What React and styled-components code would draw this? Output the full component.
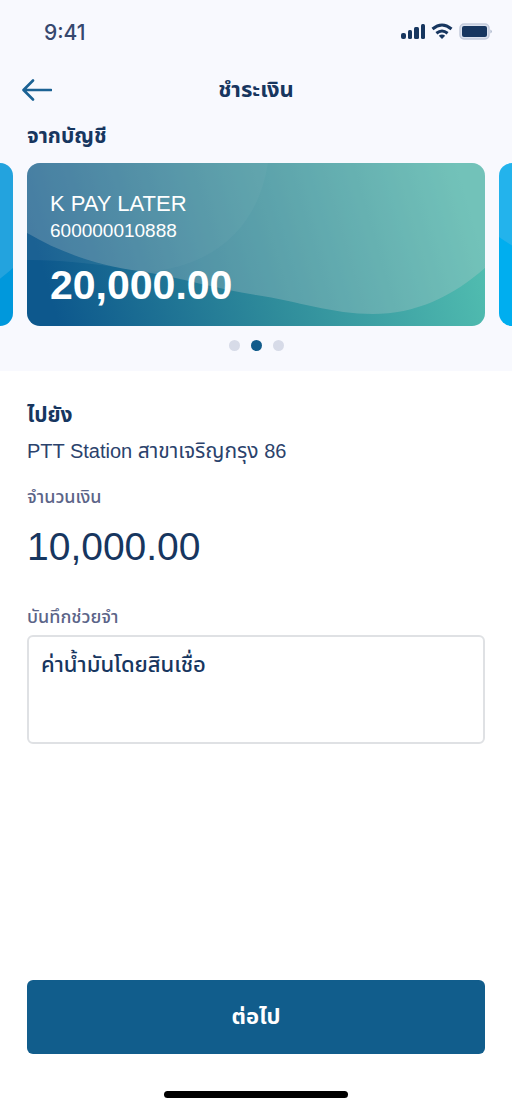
import { useState } from "react";
import styled, { createGlobalStyle } from "styled-components";

const accounts = [
  { id: "savings", from: "#0098dc", to: "#0098dc" },
  {
    id: "paylater",
    name: "K PAY LATER",
    number: "600000010888",
    balance: "20,000.00",
    from: "#0d588d",
    to: "#51bdb0",
  },
  { id: "current", from: "#00aeef", to: "#00aeef" },
];

function CardWave({ id, from, to }) {
  return (
    <WaveSvg viewBox="0 0 458 163" preserveAspectRatio="none" aria-hidden="true">
      <defs>
        <linearGradient
          id={`base-${id}`}
          gradientUnits="userSpaceOnUse"
          x1="40"
          y1="190"
          x2="450"
          y2="70"
        >
          <stop offset="0" stopColor={from} />
          <stop offset="0.5" stopColor="#2f8c9b" />
          <stop offset="1" stopColor={to} />
        </linearGradient>
      </defs>
      <rect width="458" height="163" fill={`url(#base-${id})`} />
      <path
        d="M0 97C38 97 72 101 112 108C72 103 34 90 0 70Z"
        fill="#fff"
        fillOpacity="0.06"
      />
      <path
        d="M0 0H458V105C425 134 388 151 346 151C305 151 270 138 229 132C190 126 155 115 112 108C72 103 34 90 0 70Z"
        fill="#c8d0d2"
        fillOpacity="0.28"
      />
      <path
        d="M0 0H241C232 58 196 98 130 108Q120 109 112 108C72 103 34 90 0 70Z"
        fill="#fff"
        fillOpacity="0.03"
      />
    </WaveSvg>
  );
}

function SideWave({ id, from }) {
  return (
    <WaveSvg viewBox="0 0 458 163" preserveAspectRatio="none" aria-hidden="true">
      <rect width="458" height="163" fill={from} />
      <path
        d={
          id === "savings"
            ? "M0 0H458V105C425 134 388 151 346 151C240 151 130 120 0 70Z"
            : "M0 0H458V105C425 134 388 151 346 151C200 140 80 130 0 74Z"
        }
        fill="#8cc4e4"
        fillOpacity="0.25"
      />
    </WaveSvg>
  );
}

function StatusIcons() {
  return (
    <svg width="92" height="18" viewBox="0 0 92 18" aria-label="สถานะเครื่อง">
      <g fill="#17365f">
        <rect x="0" y="10" width="5" height="6" rx="2" />
        <rect x="7" y="7" width="4" height="9" rx="1.5" />
        <rect x="13" y="4" width="5" height="12" rx="1.5" />
        <rect x="20" y="1" width="4" height="15" rx="1.5" />
      </g>
      <g fill="none" stroke="#17365f" strokeWidth="3">
        <path d="M31.500 6Q41 -2 50.500 6" />
        <path d="M35.400 10.200Q41 5.800 46.600 10.200" />
      </g>
      <path d="M37.800 12.700Q41 10.300 44.200 12.700L41 16Z" fill="#17365f" />
      <rect x="59" y="1" width="29" height="15" rx="4" fill="#dce2ee" stroke="#c3cbdb" strokeWidth="1.5" />
      <rect x="61" y="3" width="25" height="11" rx="2" fill="#17365f" />
      <path d="M89.500 6.500Q92 8.500 89.500 10.500Z" fill="#9ca9c0" />
    </svg>
  );
}

function App() {
  const [note, setNote] = useState("ค่าน้ำมันโดยสินเชื่อ");

  return (
    <Page>
      <GlobalStyle />
      <Top>
        <StatusBar>
          <Time>9:41</Time>
          <StatusIcons />
        </StatusBar>
        <NavBar>
          <BackButton type="button" aria-label="ย้อนกลับ">
            <svg width="30" height="22" viewBox="0 0 30 22" fill="none" stroke="#1b6294" strokeWidth="2.6" strokeLinecap="round" strokeLinejoin="round">
              <path d="M29 11H2M11 1.500L1.500 11L11 20.500" />
            </svg>
          </BackButton>
          <PageTitle>ชำระเงิน</PageTitle>
        </NavBar>
        <FromTitle>จากบัญชี</FromTitle>
        <Carousel>
          {accounts.map((account) => (
            <Card key={account.id}>
              {account.name ? (
                <CardWave {...account} />
              ) : (
                <SideWave {...account} />
              )}
              <CardBody>
                <CardName>{account.name}</CardName>
                <CardNumber>{account.number}</CardNumber>
                <CardBalance>{account.balance}</CardBalance>
              </CardBody>
            </Card>
          ))}
        </Carousel>
        <Dots>
          {accounts.map((account) => (
            <Dot key={account.id} $active={account.id === "paylater"} />
          ))}
        </Dots>
      </Top>
      <Details>
        <ToTitle>ไปยัง</ToTitle>
        <Payee>
          PTT Station <Branch>สาขาเจริญกรุง</Branch> 86
        </Payee>
        <Label as="p">จำนวนเงิน</Label>
        <Amount>10,000.00</Amount>
        <Label htmlFor="note">บันทึกช่วยจำ</Label>
        <Note
          id="note"
          value={note}
          onChange={(e) => setNote(e.target.value)}
        />
      </Details>
      <Footer>
        <NextButton type="button">ต่อไป</NextButton>
        <HomeIndicator />
      </Footer>
    </Page>
  );
}

const GlobalStyle = createGlobalStyle`
  * {
    box-sizing: border-box;
  }

  body {
    margin: 0;
    background-color: #fff;
  }

  body, button, textarea {
    font-family: "Liberation Sans", "Noto Sans Thai", "Noto Sans", sans-serif;
  }

  h1, h2, p {
    margin: 0;
  }
`;

const Page = styled.div`
  min-height: 100vh;
  display: flex;
  flex-direction: column;
  color: #17365f;
`;

const Top = styled.header`
  background-color: #f8f9fe;
  padding-bottom: 20px;
`;

const StatusBar = styled.div`
  height: 64px;
  padding: 0 19px 0 44px;
  display: flex;
  align-items: center;
  justify-content: space-between;
`;

const Time = styled.span`
  font-family: "Inter", sans-serif;
  font-size: 21px;
  font-weight: 500;
  color: #36486e;
`;

const NavBar = styled.nav`
  height: 52px;
  padding: 0 22px;
  display: grid;
  grid-template-columns: 30px 1fr 30px;
  align-items: center;
`;

const BackButton = styled.button`
  display: flex;
  padding: 0;
  border: none;
  background: none;
  cursor: pointer;
`;

const PageTitle = styled.h1`
  font-size: 22px;
  line-height: 32px;
  font-weight: 700;
  text-align: center;
`;

const SectionTitle = styled.h2`
  font-size: 21px;
  line-height: 32px;
  font-weight: 700;
`;

const FromTitle = styled(SectionTitle)`
  padding: 4px 27px 0;
  margin-bottom: 11px;
`;

const ToTitle = styled(SectionTitle)`
  margin-bottom: 4px;
`;

const Carousel = styled.div`
  display: flex;
  justify-content: center;
  gap: 14px;
  overflow: hidden;
`;

const Card = styled.article`
  position: relative;
  flex: 0 0 calc(100% - 54px);
  min-height: 163px;
  border-radius: 13px;
  overflow: hidden;
  color: #fff;
`;

const WaveSvg = styled.svg`
  position: absolute;
  inset: 0;
  width: 100%;
  height: 100%;
`;

const CardBody = styled.div`
  position: relative;
  padding: 27px 23px 12px;
`;

const CardName = styled.p`
  font-size: 22px;
  line-height: 28px;
`;

const CardNumber = styled.p`
  font-size: 19px;
  line-height: 26px;
`;

const CardBalance = styled.p`
  margin-top: 16px;
  font-size: 41px;
  line-height: 50px;
  font-weight: 700;
`;

const Dots = styled.div`
  display: flex;
  justify-content: center;
  gap: 11px;
  padding-top: 14px;
`;

const Dot = styled.span`
  width: 11px;
  height: 11px;
  border-radius: 50%;
  background-color: ${({ $active }) => ($active ? "#125c8b" : "#d7dbe8")};
`;

const Details = styled.main`
  flex: 1;
  padding: 28px 27px;
  display: flex;
  flex-direction: column;
`;

const Payee = styled.p`
  font-size: 20px;
  line-height: 32px;
  margin-bottom: 16px;
  color: #2b426c;
`;

const Branch = styled.span`
  font-size: 21px;
`;

const Label = styled.label`
  font-size: 18px;
  line-height: 28px;
  font-weight: 500;
  color: #5b6488;
`;

const Amount = styled.p`
  font-size: 39px;
  line-height: 48px;
  margin: 12px 0 32px;
`;

const Note = styled.textarea`
  height: 109px;
  margin-top: 4px;
  padding: 12px;
  border: 2px solid #dfe1e4;
  border-radius: 6px;
  resize: none;
  outline: none;
  font-size: 22px;
  line-height: 32px;
  font-weight: 500;
  color: #17365f;
`;

const Footer = styled.footer`
  padding: 0 27px 10px;
  display: flex;
  flex-direction: column;
  align-items: center;
  gap: 37px;
`;

const NextButton = styled.button`
  width: 100%;
  height: 74px;
  border: none;
  border-radius: 6px;
  background-color: #115d8c;
  color: #fff;
  font-size: 22px;
  font-weight: 700;
  cursor: pointer;
`;

const HomeIndicator = styled.div`
  width: 40%;
  height: 7px;
  border-radius: 4px;
  background-color: #000;
`;

export default App;
